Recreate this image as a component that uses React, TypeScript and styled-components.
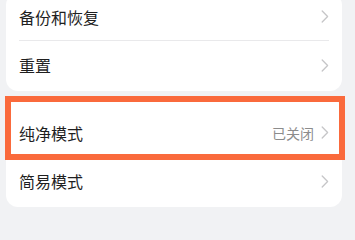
import React from "react";
import styled, { createGlobalStyle } from "styled-components";

const Global = createGlobalStyle`
  html, body { margin: 0; padding: 0; background: #f1f2f4; }
  body { font-family: "Noto Sans CJK SC", "Noto Sans", sans-serif; overflow: hidden; }
`;

const Page = styled.div`
  position: relative;
  width: 355px;
  height: 212px;
  overflow: hidden;
  padding: 0 13px 0 6px;
  box-sizing: border-box;
`;

const Card = styled.div<{ $top: number; $padTop: number }>`
  background: #ffffff;
  border-radius: 12px;
  margin-top: ${(p) => p.$top}px;
  padding: ${(p) => p.$padTop}px 13px 2px 13px;
`;

const Row = styled.div<{ $divider?: boolean }>`
  height: 48px;
  display: flex;
  align-items: center;
  justify-content: space-between;
  box-sizing: border-box;
  border-bottom: ${(p) => (p.$divider ? "1px solid #e9e9eb" : "none")};
`;

const Label = styled.span`
  font-size: 16px;
  color: #1f1f1f;
  line-height: 1;
`;

const Right = styled.div`
  display: flex;
  align-items: center;
  gap: 7px;
`;

const Value = styled.span`
  font-size: 14px;
  color: #8c8c8c;
  line-height: 1;
`;

const Highlight = styled.div`
  position: absolute;
  left: 5px;
  top: 96px;
  width: 340px;
  height: 64px;
  box-sizing: border-box;
  border: 6px solid #fa6a3c;
  pointer-events: none;
`;

const Chevron = () => (
  <svg width="8" height="13" viewBox="0 0 8 13" style={{ display: "block" }}>
    <path d="M1.2 1 L6.6 6.5 L1.2 12" fill="none" stroke="#c6c6c8" strokeWidth="1.3" strokeLinecap="round" strokeLinejoin="round" />
  </svg>
);

type Item = { label: string; value?: string };

const Section = ({ items, top, padTop }: { items: Item[]; top: number; padTop: number }) => (
  <Card $top={top} $padTop={padTop}>
    {items.map((it, i) => (
      <Row key={it.label} $divider={i < items.length - 1}>
        <Label>{it.label}</Label>
        <Right>
          {it.value && <Value>{it.value}</Value>}
          <Chevron />
        </Right>
      </Row>
    ))}
  </Card>
);

export default function App() {
  return (
    <>
      <Global />
      <Page>
        <Section top={-7} padTop={0} items={[{ label: "备份和恢复" }, { label: "重置" }]} />
        <Section top={8} padTop={10} items={[{ label: "纯净模式", value: "已关闭" }, { label: "简易模式" }]} />
        <Highlight />
      </Page>
    </>
  );
}
